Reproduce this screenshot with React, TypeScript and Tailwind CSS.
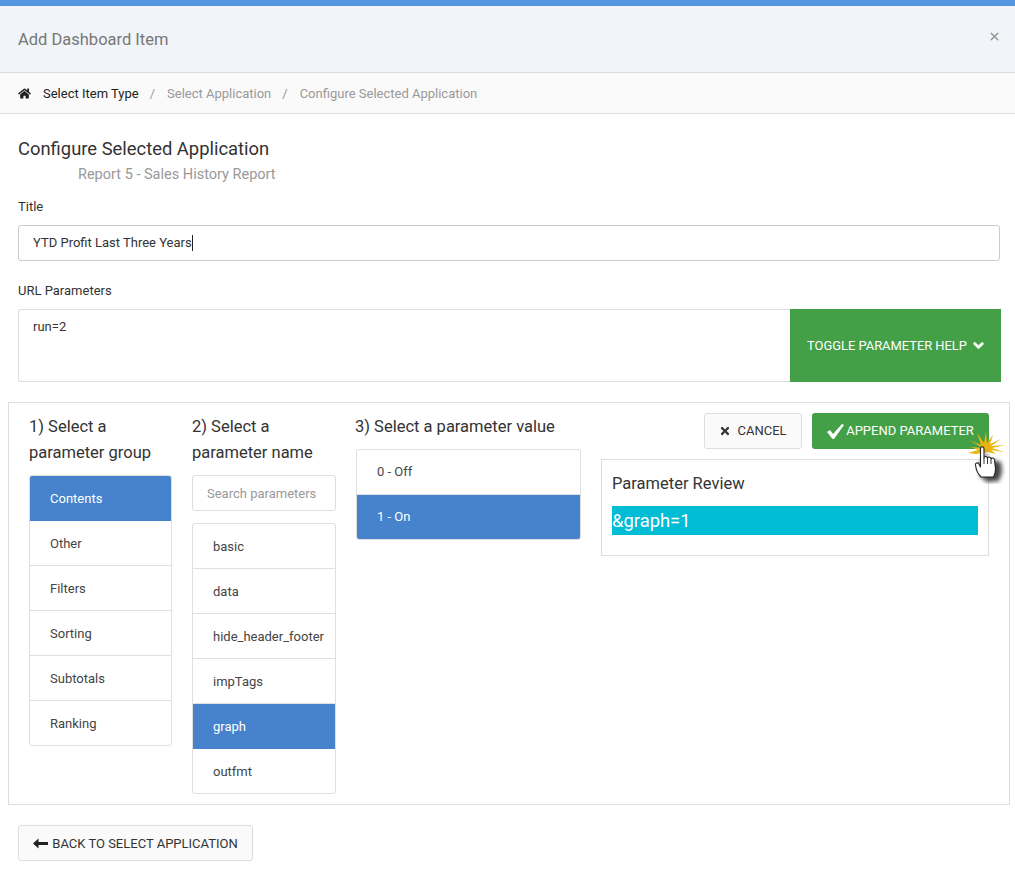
import { X } from 'lucide-react';
import { FaHome, FaChevronDown, FaTimes } from 'react-icons/fa';

const groups = ['Contents', 'Other', 'Filters', 'Sorting', 'Subtotals', 'Ranking'];
const names = ['basic', 'data', 'hide_header_footer', 'impTags', 'graph', 'outfmt'];
const values = ['0 - Off', '1 - On'];

function ListGroup({ items, active, width, flat }: { items: string[]; active: string; width: string; flat?: boolean }) {
  return (
    <div className={`${width} rounded-[3px] border border-[#dfdfdf] bg-white overflow-hidden`}>
      {items.map((item, i) => (
        <div
          key={item}
          className={`flex items-center pl-[20px] text-[13px] ${i > 0 ? 'h-[45px] border-t' : 'h-[44px]'} ${
            flat ? '' : i > 0 ? 'pt-[2px]' : 'pt-[1px]'
          } ${item === active ? 'bg-[#4683cc] text-white' : 'text-[#444444]'} ${
            items[i - 1] === active ? 'border-[#4683cc]' : 'border-[#dfdfdf]'
          }`}
        >
          {item}
        </div>
      ))}
    </div>
  );
}

// hand pointer with the yellow click burst, as pasted onto the screenshot
function ClickCursor() {
  return (
    <svg className="absolute left-[966px] top-[432px]" width="44" height="52" viewBox="0 0 44 52">
      <defs>
        <filter id="cursor-shadow" x="-50%" y="-50%" width="220%" height="220%">
          <feGaussianBlur stdDeviation="2" />
        </filter>
      </defs>
      <path
        d="M17 16 L3 8 L15 13 L11 1 L18 11 L20 0 L21 11 L27 3 L24 12 L35 7 L25 14 L39 13 L26 16 L38 20 L25 18 L30 22 L22 20 L10 22 L2 21 L12 18 L5 15 Z"
        fill="#ecb40f"
      />
      <path d="M21 19 L21 30 L26 28 L35 30 L36 40 L33 49 L21 50 L15 45 L12 35 Z" fill="#444444" filter="url(#cursor-shadow)" />
      <path
        d="M14.5 17 C14.5 14 18 14 18 17 L18 26 C18 24 21.5 24 21.5 26.5 C21.5 24.5 25 24.5 25 27 C25 25.5 28.5 25.5 28.5 28 L29.5 37 C29.5 41 28.5 43 27.5 45 L15 45 C12 42 10 37 9.5 33 C9 31 12 30 13 32 L14.5 35 Z"
        fill="#ffffff"
        stroke="#222222"
        strokeWidth="1.1"
        strokeLinejoin="round"
      />
      <path d="M18 26 L18 32 M21.5 26.5 L21.5 32 M25 27 L25 32" stroke="#222222" strokeWidth="0.9" />
    </svg>
  );
}

export default function App() {
  return (
    <div className="relative w-[1015px] h-[869px] overflow-hidden bg-white font-['Roboto',sans-serif] text-[#333333]">
      <div className="h-[6px] bg-[#5596e0]" />

      <header className="h-[67px] bg-[#f1f5f9] border-b border-[#d9dcdf] flex items-center justify-between pl-[18px] pr-[14px]">
        <h1 className="text-[16.5px] pt-[2px] text-[#777777]">Add Dashboard Item</h1>
        <X className="size-[13px] text-[#999999] mb-[6px]" strokeWidth={3} />
      </header>

      <nav className="h-[41px] bg-[#fafafa] border-b border-[#dddddd] flex items-center pt-[2px] pl-[18px] text-[13px] text-[#999999]">
        <FaHome className="size-[13px] text-[#222222] mr-[12px] mb-[2px]" />
        <span className="text-[#222222]">Select Item Type</span>
        <span className="ml-[11px] mr-[12px] text-[#999999]">/</span>
        <span>Select Application</span>
        <span className="ml-[11px] mr-[12px] text-[#999999]">/</span>
        <span>Configure Selected Application</span>
      </nav>

      <main className="px-[18px] pt-[24px]">
        <h2 className="text-[18.4px] leading-[22px] text-[#333333]">Configure Selected Application</h2>
        <p className="pl-[60px] mt-[6px] text-[14.5px] leading-[18px] text-[#999999]">Report 5 - Sales History Report</p>

        <label className="block mt-[15px] text-[13px] leading-[16px] text-[#333333]">Title</label>
        <div className="mt-[10px] h-[36px] w-[982px] rounded-[3px] border border-[#cccccc] bg-white flex items-center pl-[14px] text-[13px]">
          YTD Profit Last Three Years
          <span className="inline-block w-px h-[16px] bg-[#222222]" />
        </div>

        <label className="block mt-[22px] text-[13px] leading-[16px] text-[#333333]">URL Parameters</label>
        <div className="mt-[10px] flex h-[73px] w-[983px]">
          <div className="w-[772px] rounded-l-[3px] border border-r-0 border-[#dddddd] pl-[14px] pt-[9px] text-[13px] leading-[16px]">
            run=2
          </div>
          <button className="w-[211px] bg-[#43a047] text-white text-[12.9px] flex items-center justify-center gap-[6px]">
            TOGGLE PARAMETER HELP
            <FaChevronDown className="size-[11px] stroke-[50]" />
          </button>
        </div>
      </main>

      <section className="mt-[20px] ml-[8px] w-[1002px] h-[403px] border border-[#dddddd] pt-[10px] pl-[20px] flex">
        <div className="w-[163px] pt-px">
          <h3 className="text-[16.5px] leading-[26px]">
            1) Select a<br />
            parameter group
          </h3>
          <div className="mt-[9px]">
            <ListGroup items={groups} active="Contents" width="w-[143px]" />
          </div>
        </div>

        <div className="w-[163px] pt-px">
          <h3 className="text-[16.5px] leading-[26px]">
            2) Select a<br />
            parameter name
          </h3>
          <div className="mt-[9px] w-[144px] h-[36px] rounded-[3px] border border-[#dddddd] flex items-center pt-[2px] pl-[14px] text-[13px] text-[#999999]">
            Search parameters
          </div>
          <div className="mt-[12px]">
            <ListGroup items={names} active="graph" width="w-[144px]" />
          </div>
        </div>

        <div className="w-[246px] pt-px">
          <h3 className="text-[16.5px] leading-[26px]">3) Select a parameter value</h3>
          <div className="mt-[9px] ml-px">
            <ListGroup items={values} active="1 - On" width="w-[225px]" flat />
          </div>
        </div>

        <div className="w-[388px]">
          <div className="flex justify-end gap-[10px]">
            <button className="w-[98px] h-[36px] rounded-[3px] border border-[#dddddd] bg-[#fafafa] flex items-center justify-center gap-[6px] text-[13px] text-[#333333]">
              <FaTimes className="size-[12px]" />
              CANCEL
            </button>
            <button className="w-[177px] h-[36px] rounded-[3px] bg-[#43a047] text-white flex items-center justify-center gap-[2px] text-[13px]">
              <svg width="17" height="15" viewBox="0 0 17 15" fill="currentColor">
                <path d="M0 8 L3 6 L6 10 L15 0 L17 1 L7 15 L5.5 15 Z" />
              </svg>
              APPEND PARAMETER
            </button>
          </div>
          <div className="mt-[10px] h-[97px] border border-[#dddddd] pl-[10px] pr-[10px] pt-[14px]">
            <h4 className="text-[16.5px] leading-[19px]">Parameter Review</h4>
            <div className="mt-[13px] h-[29px] bg-[#00bcd4] text-white text-[18.4px] leading-[29px]">&amp;graph=1</div>
          </div>
        </div>
      </section>

      <button className="mt-[20px] ml-[18px] w-[235px] h-[36px] rounded-[3px] border border-[#dddddd] bg-[#fafafa] flex items-center justify-center gap-[4px] pt-[2px] text-[13px] text-[#333333]">
        <svg className="mb-[2px]" width="15" height="11" viewBox="0 0 15 11" fill="#222222">
          <path d="M0 5.5 L5.5 0.5 L5.5 4 L15 4 L15 7 L5.5 7 L5.5 10.5 Z" />
        </svg>
        BACK TO SELECT APPLICATION
      </button>

      <ClickCursor />
    </div>
  );
}
